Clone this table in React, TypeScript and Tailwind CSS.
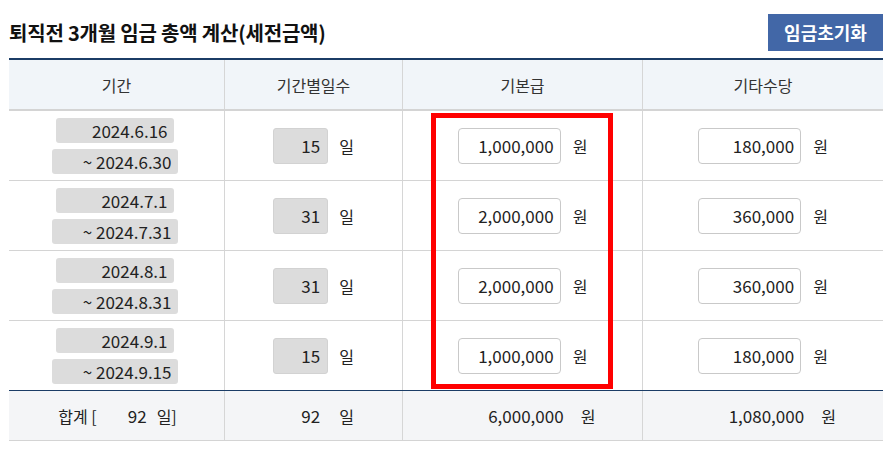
import React from 'react';

interface PeriodRow {
  from: string;
  to: string;
  days: number;
  base: string;
  extra: string;
}

const rows: PeriodRow[] = [
  { from: '2024.6.16', to: '~ 2024.6.30', days: 15, base: '1,000,000', extra: '180,000' },
  { from: '2024.7.1', to: '~ 2024.7.31', days: 31, base: '2,000,000', extra: '360,000' },
  { from: '2024.8.1', to: '~ 2024.8.31', days: 31, base: '2,000,000', extra: '360,000' },
  { from: '2024.9.1', to: '~ 2024.9.15', days: 15, base: '1,000,000', extra: '180,000' },
];

const cols = 'grid grid-cols-[216px_178px_240px_240px]';
const cellBorder = 'border-r border-[#d6d6d6]';

export default function App() {
  return (
    <div className="w-[895px] h-[455px] bg-white px-[9px] pt-[14px] text-[#222] font-['Noto_Sans_CJK_KR','Noto_Sans',sans-serif]">
      {/* Title */}
      <div className="flex items-center justify-between w-[874px] mb-[7px]">
        <h2 className="text-[20px] font-bold text-[#111] tracking-[-0.2px]">퇴직전 3개월 임금 총액 계산(세전금액)</h2>
        <button className="w-[115px] h-[37px] bg-[#4267a7] text-white text-[18px] font-bold">임금초기화</button>
      </div>

      {/* Table */}
      <div className="relative w-[874px] border-t-2 border-[#1b3c66]">
        <div className={`${cols} h-[51px] bg-[#f1f5f9] border-b-2 border-[#d4d4d4] text-[16px] text-[#333]`}>
          <div className={`${cellBorder} flex items-center justify-center`}>기간</div>
          <div className={`${cellBorder} flex items-center justify-center`}>기간별일수</div>
          <div className={`${cellBorder} flex items-center justify-center`}>기본급</div>
          <div className="flex items-center justify-center">기타수당</div>
        </div>

        {rows.map((r, i) => (
          <div
            key={r.from}
            className={`${cols} h-[70px] border-b ${i === rows.length - 1 ? 'border-[#1b3c66]' : 'border-[#d4d4d4]'} text-[16px]`}
          >
            <div className={`${cellBorder} flex flex-col items-center justify-center gap-[6px] pr-[4px] text-[17px]`}>
              <div className="w-[118px] h-[25px] rounded-[3px] bg-[#dcdcdc] flex items-center justify-end pr-[6px] leading-none">{r.from}</div>
              <div className="w-[126px] h-[25px] rounded-[3px] bg-[#dcdcdc] flex items-center justify-end pr-[6px] leading-none">{r.to}</div>
            </div>
            <div className={`${cellBorder} flex items-center justify-center gap-[11px]`}>
              <div className="w-[55px] h-[36px] rounded-[3px] bg-[#dcdcdc] border border-[#d2d2d2] flex items-center justify-end pr-[7px] leading-none text-[17px]">{r.days}</div>
              <span>일</span>
            </div>
            <div className={`${cellBorder} flex items-center justify-center gap-[12px]`}>
              <div className="w-[103px] h-[36px] rounded-[4px] bg-white border border-[#c9c9c9] flex items-center justify-end pr-[6px] leading-none text-[17px]">{r.base}</div>
              <span>원</span>
            </div>
            <div className="flex items-center justify-center gap-[12px]">
              <div className="w-[103px] h-[36px] rounded-[4px] bg-white border border-[#c9c9c9] flex items-center justify-end pr-[6px] leading-none text-[17px]">{r.extra}</div>
              <span>원</span>
            </div>
          </div>
        ))}

        {/* Totals */}
        <div className={`${cols} h-[50px] bg-[#f4f5f7] border-b border-[#d4d4d4] text-[16px]`}>
          <div className={`${cellBorder} flex items-center justify-center pl-[2px]`}>
            <span>합계 [</span>
            <span className="w-[50px] text-right text-[17px]">92</span>
            <span className="ml-[10px]">일]</span>
          </div>
          <div className={`${cellBorder} flex items-center justify-center gap-[11px]`}>
            <span className="w-[55px] text-right pr-[8px] text-[17px]">92</span>
            <span>일</span>
          </div>
          <div className={`${cellBorder} flex items-center justify-center gap-[17px]`}>
            <span className="w-[114px] text-right text-[17px]">6,000,000</span>
            <span>원</span>
          </div>
          <div className="flex items-center justify-center gap-[17px]">
            <span className="w-[114px] text-right text-[17px]">1,080,000</span>
            <span>원</span>
          </div>
        </div>

        {/* highlight box */}
        <div className="absolute left-[422px] top-[53px] w-[182px] h-[276px] border-[5px] border-[#ff0000] pointer-events-none" />
      </div>
    </div>
  );
}
